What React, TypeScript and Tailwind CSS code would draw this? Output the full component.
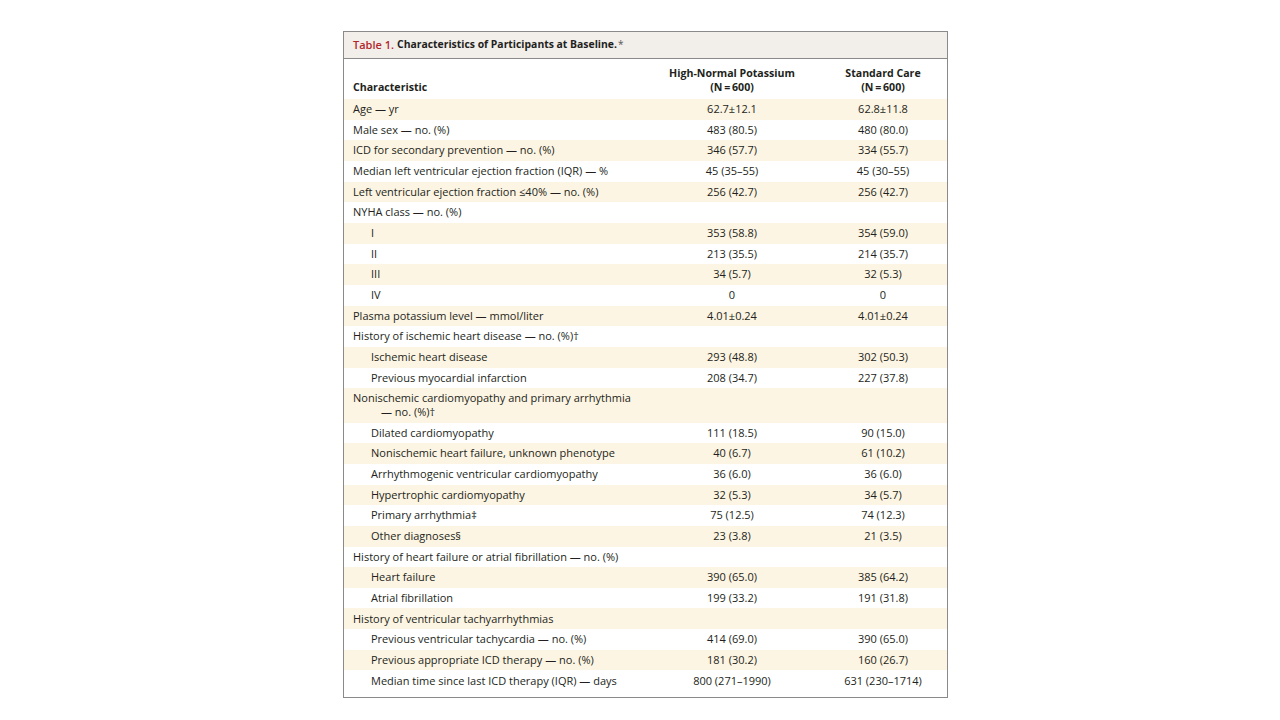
import React from 'react'

type Row = {
  label: string
  a?: string
  b?: string
  indent?: boolean
  cont?: string
}

const rows: Row[] = [
  { label: 'Age — yr', a: '62.7±12.1', b: '62.8±11.8' },
  { label: 'Male sex — no. (%)', a: '483 (80.5)', b: '480 (80.0)' },
  { label: 'ICD for secondary prevention — no. (%)', a: '346 (57.7)', b: '334 (55.7)' },
  { label: 'Median left ventricular ejection fraction (IQR) — %', a: '45 (35–55)', b: '45 (30–55)' },
  { label: 'Left ventricular ejection fraction ≤40% — no. (%)', a: '256 (42.7)', b: '256 (42.7)' },
  { label: 'NYHA class — no. (%)' },
  { label: 'I', a: '353 (58.8)', b: '354 (59.0)', indent: true },
  { label: 'II', a: '213 (35.5)', b: '214 (35.7)', indent: true },
  { label: 'III', a: '34 (5.7)', b: '32 (5.3)', indent: true },
  { label: 'IV', a: '0', b: '0', indent: true },
  { label: 'Plasma potassium level — mmol/liter', a: '4.01±0.24', b: '4.01±0.24' },
  { label: 'History of ischemic heart disease — no. (%)†' },
  { label: 'Ischemic heart disease', a: '293 (48.8)', b: '302 (50.3)', indent: true },
  { label: 'Previous myocardial infarction', a: '208 (34.7)', b: '227 (37.8)', indent: true },
  { label: 'Nonischemic cardiomyopathy and primary arrhythmia', cont: '— no. (%)†' },
  { label: 'Dilated cardiomyopathy', a: '111 (18.5)', b: '90 (15.0)', indent: true },
  { label: 'Nonischemic heart failure, unknown phenotype', a: '40 (6.7)', b: '61 (10.2)', indent: true },
  { label: 'Arrhythmogenic ventricular cardiomyopathy', a: '36 (6.0)', b: '36 (6.0)', indent: true },
  { label: 'Hypertrophic cardiomyopathy', a: '32 (5.3)', b: '34 (5.7)', indent: true },
  { label: 'Primary arrhythmia‡', a: '75 (12.5)', b: '74 (12.3)', indent: true },
  { label: 'Other diagnoses§', a: '23 (3.8)', b: '21 (3.5)', indent: true },
  { label: 'History of heart failure or atrial fibrillation — no. (%)' },
  { label: 'Heart failure', a: '390 (65.0)', b: '385 (64.2)', indent: true },
  { label: 'Atrial fibrillation', a: '199 (33.2)', b: '191 (31.8)', indent: true },
  { label: 'History of ventricular tachyarrhythmias' },
  { label: 'Previous ventricular tachycardia — no. (%)', a: '414 (69.0)', b: '390 (65.0)', indent: true },
  { label: 'Previous appropriate ICD therapy — no. (%)', a: '181 (30.2)', b: '160 (26.7)', indent: true },
  { label: 'Median time since last ICD therapy (IQR) — days', a: '800 (271–1990)', b: '631 (230–1714)', indent: true },
]

export default function App() {
  return (
    <div className="w-[1280px] h-[720px] bg-white pt-[31px] pl-[343px] font-['Open_Sans',sans-serif] text-[#231f20]">
      <div className="w-[605px] border border-[#8a8a8a] bg-white pb-[6px]">
        {/* Title */}
        <div className="h-[27px] bg-[#f2eeea] border-b border-[#8a8a8a] flex items-center pl-[9px] text-[10.4px] font-bold">
          <span className="text-[#b3262b] font-semibold text-[11px]">Table 1.</span>
          <span className="ml-[3px]">Characteristics of Participants at Baseline.</span>
          <span className="text-[10px] leading-none self-start mt-[7px] ml-[1px] font-normal text-[#555]">*</span>
        </div>

        {/* Header */}
        <div className="grid grid-cols-[1fr_174px_128px] h-[40px] items-end pb-[5px] text-[10.6px] font-bold leading-[14px]">
          <div className="pl-[9px]">Characteristic</div>
          <div className="text-center">
            High-Normal Potassium
            <br />
            (N{'\u2009'}={'\u2009'}600)
          </div>
          <div className="text-center">
            Standard Care
            <br />
            (N{'\u2009'}={'\u2009'}600)
          </div>
        </div>

        {/* Body */}
        <div className="text-[11px]">
          {rows.map((r, i) => (
            <div
              key={i}
              className={`grid grid-cols-[1fr_174px_128px] items-center ${
                i % 2 === 0 ? 'bg-[#fdf5e3]' : 'bg-white'
              } ${r.cont ? 'h-[34.4px] leading-[14px]' : 'h-[20.67px]'}`}
            >
              <div className={r.indent ? 'pl-[27px]' : 'pl-[9px]'}>
                {r.label}
                {r.cont && <div className="pl-[28px]">{r.cont}</div>}
              </div>
              <div className="text-center">{r.a}</div>
              <div className="text-center">{r.b}</div>
            </div>
          ))}
        </div>
      </div>
    </div>
  )
}
